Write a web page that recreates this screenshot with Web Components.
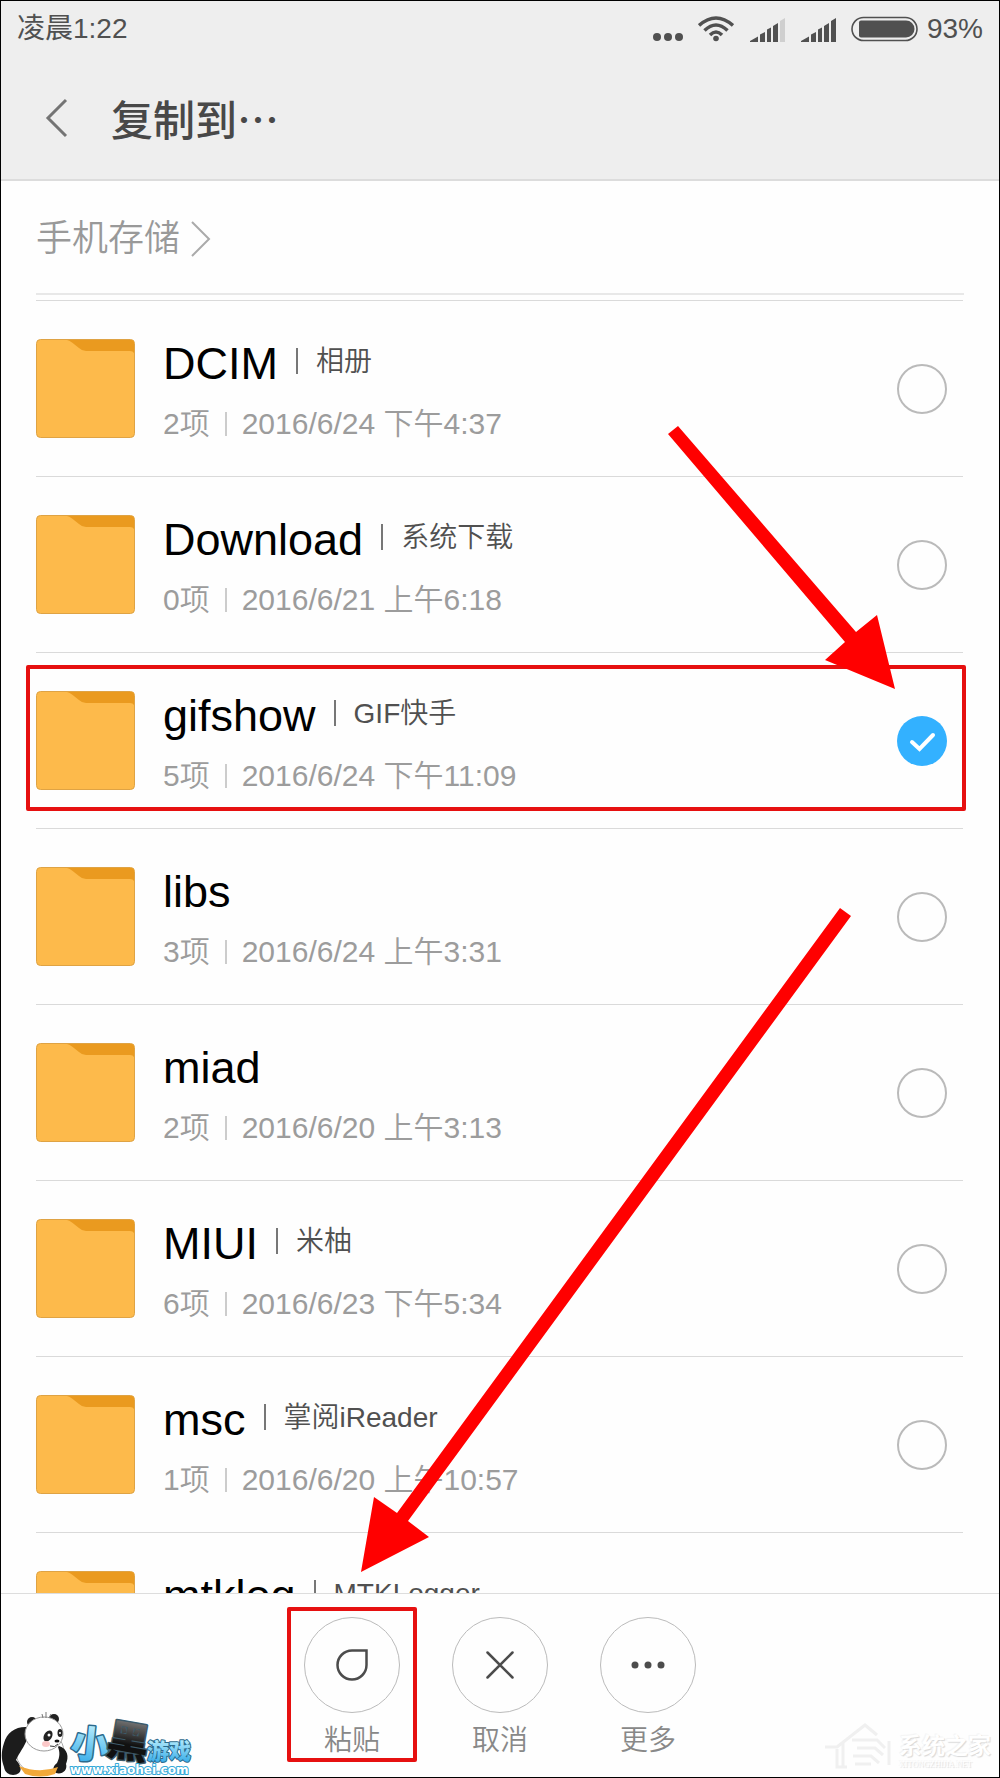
<!DOCTYPE html>
<html lang="zh-CN">
<head>
<meta charset="UTF-8">
<meta name="viewport" content="width=device-width, initial-scale=1">
<title>复制到…</title>
<style>
    html, body {
        height: 100%;
        margin: 0;
    }

    body {
        background: #fefefe;
        font-family: "Liberation Sans", "Noto Sans CJK SC", sans-serif;
        color: #000;
    }
</style>
</head>
<body>
<file-picker></file-picker>

<script>
/** Status bar: clock, signal icons and battery */
class StatusBar extends HTMLElement {
    constructor() {
        super();
        this.attachShadow({ mode: 'open' });
    }

    connectedCallback() {
        this.shadowRoot.innerHTML = `
            <style>
                :host {
                    display: flex;
                    align-items: center;
                    justify-content: space-between;
                    height: 56px;
                    padding: 0 16px;
                    font-size: 28px;
                    line-height: 40px;
                    color: #505050;
                }

                .icons {
                    display: flex;
                    align-items: center;
                    gap: 15px;
                }

                .battery {
                    display: flex;
                    align-items: center;
                    gap: 8px;
                }

                svg {
                    display: block;
                    fill: currentColor;
                }
            </style>
            <span><slot></slot></span>
            <div class="icons">
                <svg width="30" height="26" viewBox="0 0 30 26">
                    <circle cx="4" cy="21" r="4"/><circle cx="15" cy="21" r="4"/><circle cx="26" cy="21" r="4"/>
                </svg>
                <svg width="36" height="26" viewBox="0 0 36 26">
                    <g fill="none" stroke="currentColor" stroke-width="3.500">
                        <path d="M1 9.500Q18 -5.500 35 9.500"/>
                        <path d="M6.500 14.500Q18 3.500 29.500 14.500"/>
                        <path d="M12 19Q18 13 24 19"/>
                    </g>
                    <circle cx="18" cy="22.500" r="2.800"/>
                </svg>
                <svg width="36" height="26" viewBox="0 0 36 26">
                    <path d="M1 26V25L9 20.500V26zM11 26V18.500L16 16V26zM18 26V13.500L22 11.500V26zM24 26V10L29 7V26z"/>
                    <path d="M31 26V5L36 2V26z" fill="#cfcfcf"/>
                </svg>
                <svg width="36" height="26" viewBox="0 0 36 26">
                    <path d="M1 26V25L9 20.500V26zM11 26V18.500L16 16V26zM18 26V13.500L22 11.500V26zM24 26V10L29 7V26zM31 26V5L36 2V26z"/>
                </svg>
                <div class="battery">
                    <svg width="68" height="26" viewBox="0 0 68 26">
                        <rect x="1" y="1.500" width="65" height="23" rx="11.500" fill="none" stroke="currentColor" stroke-width="1.600"/>
                        <path d="M10 4.500H55a8.500 8.500 0 0 1 0 17H10a2 2 0 0 1-2-2V6.500a2 2 0 0 1 2-2z"/>
                    </svg>
                    <slot name="battery"></slot>
                </div>
            </div>
        `;
    }
}

/** Title bar with the back button */
class TitleBar extends HTMLElement {
    constructor() {
        super();
        this.attachShadow({ mode: 'open' });
    }

    connectedCallback() {
        this.shadowRoot.innerHTML = `
            <style>
                :host {
                    display: flex;
                    align-items: center;
                    gap: 42px;
                    height: 122px;
                    padding: 0 44px;
                    border-bottom: 2px solid #dcdcdc;
                }

                button {
                    padding: 0;
                    border: 0;
                    background: none;
                }

                svg {
                    display: block;
                }

                h1 {
                    margin: 0;
                    font: 500 42px/60px "Noto Sans CJK SC", sans-serif;
                    color: #484848;
                }
            </style>
            <button type="button" aria-label="返回">
                <svg width="24" height="40" viewBox="0 0 24 40" fill="none" stroke="#747474" stroke-width="3">
                    <path d="M21 2L3 20L21 38"/>
                </svg>
            </button>
            <h1><slot></slot></h1>
        `;
    }
}

/** Current location above the list */
class PathBar extends HTMLElement {
    constructor() {
        super();
        this.attachShadow({ mode: 'open' });
    }

    connectedCallback() {
        this.shadowRoot.innerHTML = `
            <style>
                :host {
                    display: block;
                    padding: 0 35px;
                }

                nav {
                    display: flex;
                    align-items: center;
                    height: 108px;
                    padding-top: 4px;
                    border-bottom: 2px solid #e8e8e8;
                }

                a {
                    display: flex;
                    align-items: center;
                    gap: 10px;
                    font-size: 36px;
                    font-weight: 350;
                    line-height: 52px;
                    color: #999;
                    text-decoration: none;
                }
            </style>
            <nav>
                <a href="#">
                    <slot></slot>
                    <svg width="22" height="36" viewBox="0 0 22 36" fill="none" stroke="#aaa" stroke-width="2">
                        <path d="M2 1L19 18L2 35"/>
                    </svg>
                </a>
            </nav>
        `;
    }
}

/** One folder row: name, alias, item count, date and a tick box */
class FolderRow extends HTMLElement {
    constructor() {
        super();
        this.attachShadow({ mode: 'open' });
    }

    connectedCallback() {
        const name = this.getAttribute('name');
        const alias = this.getAttribute('alias');
        const count = this.getAttribute('count');
        const checked = this.hasAttribute('checked');

        this.shadowRoot.innerHTML = `
            <style>
                :host {
                    display: block;
                    position: relative;
                    flex: none;
                }

                label {
                    display: flex;
                    align-items: center;
                    height: 175px;
                    padding-right: 16px;
                    border-bottom: 1px solid #dadada;
                }

                .folder {
                    flex: none;
                    margin-right: 28px;
                }

                .info {
                    flex: 1;
                    min-width: 0;
                    padding-top: 2px;
                    white-space: nowrap;
                }

                .title {
                    display: flex;
                    align-items: flex-start;
                }

                .name {
                    font-size: 45px;
                    line-height: 60px;
                }

                .alias {
                    position: relative;
                    margin-left: 18px;
                    padding-left: 20px;
                    font-size: 28px;
                    font-weight: 350;
                    line-height: 56px;
                    color: #505050;
                }

                .alias::before {
                    content: '';
                    position: absolute;
                    left: 0;
                    top: 14px;
                    width: 2px;
                    height: 26px;
                    background: #777;
                }

                .meta {
                    display: flex;
                    align-items: center;
                    min-height: 44px;
                    margin-top: 8px;
                    font-size: 30px;
                    font-weight: 350;
                    line-height: 44px;
                    color: #9c9c9c;
                }

                .meta i {
                    width: 2px;
                    height: 24px;
                    margin: 0 15px;
                    background: #ccc;
                }

                input {
                    appearance: none;
                    flex: none;
                    width: 50px;
                    height: 50px;
                    margin: 0;
                    border: 2px solid #bababa;
                    border-radius: 50%;
                }

                input:checked {
                    border: 0;
                    background: #33b1ff url('data:image/svg+xml,<svg xmlns="http://www.w3.org/2000/svg" viewBox="0 0 50 50" fill="none" stroke="white" stroke-width="4" stroke-linecap="round"><path d="M15 26L22.500 33L36 19"/></svg>');
                }

                .mark {
                    position: absolute;
                    inset: 12px -3px 18px -10px;
                    border: 4px solid #e61010;
                    border-radius: 2px;
                    pointer-events: none;
                }
            </style>
            <label>
                <svg class="folder" width="99" height="99" viewBox="0 0 99 99">
                    <rect x=".5" y=".5" width="98" height="98" rx="4" fill="#fdba4b" stroke="#dfa344"/>
                    <path d="M31 1H95q3 0 3 3V14q-1-2-4-2H50q-4 0-7-3L36 3.500Q33 1 31 1z" fill="#ea9a1f"/>
                </svg>
                <div class="info">
                    <div class="title">
                        <span class="name">${name}</span>
                        ${alias ? `<span class="alias">${alias}</span>` : ''}
                    </div>
                    <div class="meta">
                        ${count ? `<span>${count}</span><i></i><span>${this.getAttribute('date')}</span>` : ''}
                    </div>
                </div>
                <input type="checkbox" aria-label="${name}" ${checked ? 'checked' : ''}>
            </label>
            ${checked ? '<div class="mark"></div>' : ''}
        `;
    }
}

/** Round button with a caption, icon goes in the slot */
class ToolButton extends HTMLElement {
    constructor() {
        super();
        this.attachShadow({ mode: 'open' });
    }

    connectedCallback() {
        this.shadowRoot.innerHTML = `
            <style>
                :host {
                    display: block;
                    position: relative;
                }

                button {
                    display: flex;
                    flex-direction: column;
                    align-items: center;
                    gap: 8px;
                    padding: 0;
                    border: 0;
                    background: none;
                    font: inherit;
                    color: #888;
                }

                .ring {
                    display: grid;
                    place-items: center;
                    box-sizing: border-box;
                    width: 96px;
                    height: 96px;
                    border: 1px solid #bbb;
                    border-radius: 50%;
                }

                .caption {
                    font-size: 28px;
                    font-weight: 350;
                    line-height: 40px;
                }

                .mark {
                    position: absolute;
                    inset: -10px -17px -1px;
                    border: 4px solid #e61010;
                    border-radius: 2px;
                    pointer-events: none;
                }
            </style>
            <button type="button">
                <span class="ring"><slot></slot></span>
                <span class="caption">${this.getAttribute('caption')}</span>
            </button>
            ${this.hasAttribute('marked') ? '<div class="mark"></div>' : ''}
        `;
    }
}

/** Panda logo, bottom left */
class PandaLogo extends HTMLElement {
    constructor() {
        super();
        this.attachShadow({ mode: 'open' });
    }

    connectedCallback() {
        this.shadowRoot.innerHTML = `
            <style>
                :host {
                    display: block;
                    width: 192px;
                    height: 68px;
                }

                svg {
                    display: block;
                    overflow: visible;
                }

                text {
                    font-family: "Noto Sans CJK SC", sans-serif;
                    font-weight: 900;
                    paint-order: stroke;
                    stroke-linejoin: round;
                }

                .url {
                    font-family: "DejaVu Sans", sans-serif;
                    font-weight: 700;
                }
            </style>
            <svg width="192" height="68" viewBox="0 0 192 68">
                <defs>
                    <linearGradient id="blue" x1="0" y1="0" x2="0" y2="1">
                        <stop offset=".2" stop-color="#b4ebfc"/>
                        <stop offset="1" stop-color="#2aa5e6"/>
                    </linearGradient>
                    <linearGradient id="dark" x1="0" y1="0" x2="0" y2="1">
                        <stop offset=".2" stop-color="#777"/>
                        <stop offset=".6" stop-color="#111"/>
                    </linearGradient>
                </defs>
                <ellipse cx="39" cy="43" rx="24" ry="22" fill="#fff" stroke="#aaa"/>
                <path d="M27 18C15 17 6 23 3 34C0 43 0 50 3 58C4 66 13 68 18 64C22 60 18 54 15 51C18 44 24 37 26 30z" fill="#1c1c1c"/>
                <path d="M58 37C67 40 68 48 65 55C67 61 61 66 55 64C50 61 53 56 56 54C59 48 59 43 57 38z" fill="#1c1c1c"/>
                <path d="M18 57Q38 65 57 58L54 65Q39 70 24 65z" fill="#f2a93a"/>
                <circle cx="31" cy="13" r="5" fill="#222"/>
                <circle cx="53" cy="10" r="5" fill="#222"/>
                <ellipse cx="43" cy="25" rx="19" ry="17" fill="#fff" stroke="#999"/>
                <path d="M42 9L41 5M45 9L45 3M48 9L50 5" stroke="#777" fill="none"/>
                <ellipse cx="47" cy="27" rx="4" ry="6" transform="rotate(30 47 27)" fill="#222"/>
                <ellipse cx="59" cy="24" rx="2.500" ry="4" fill="#222"/>
                <circle cx="48" cy="26" r="1.500" fill="#fff"/>
                <circle cx="59" cy="24" r="1" fill="#fff"/>
                <ellipse cx="56" cy="32" rx="2.500" ry="1.500" fill="#111"/>
                <ellipse cx="45" cy="35" rx="4" ry="3" fill="#fbc8c8"/>
                <path d="M49 37Q54 39 57 35" stroke="#333" fill="none"/>
                <g stroke="#2c6a8c" stroke-width="3">
                    <text x="70" y="49" font-size="38" fill="url(#blue)" transform="rotate(6 88 35)">小</text>
                    <text x="106" y="48" font-size="42" fill="url(#dark)" stroke="#3d5a69" transform="rotate(10 127 34)">黑</text>
                    <text x="146" y="50" font-size="22" fill="url(#blue)" stroke-width="2">游戏</text>
                </g>
                <text class="url" x="69" y="65" font-size="12" fill="#fff" stroke="#35a9d8" stroke-width="2">www.xiaohei.com</text>
            </svg>
        `;
    }
}

/** Faint site watermark, bottom right */
class SiteWatermark extends HTMLElement {
    constructor() {
        super();
        this.attachShadow({ mode: 'open' });
    }

    connectedCallback() {
        this.shadowRoot.innerHTML = `
            <style>
                :host {
                    display: flex;
                    align-items: flex-end;
                    gap: 4px;
                    color: #fff;
                    text-shadow: 1px 1px 1px #d8d8d8, -1px -1px 1px #f4f4f4;
                }

                strong {
                    display: block;
                    font-size: 23px;
                    line-height: 26px;
                }

                small {
                    display: block;
                    font: 8px/12px "Liberation Serif", serif;
                }
            </style>
            <svg width="72" height="50" viewBox="0 0 72 50" fill="none" stroke="#f0f0f0" stroke-width="3">
                <path d="M2 26H14L42 4L54 14M20 22V46M14 28V46H24M29 19H54L62 27M34 27H52L60 34M30 35H48L56 42M32 43H48M66 20V44"/>
            </svg>
            <div><strong>系统之家</strong><small>XITONGZHIJIA.NET</small></div>
        `;
    }
}

/** Red pointer arrows drawn over the whole screen */
class PointerArrows extends HTMLElement {
    constructor() {
        super();
        this.attachShadow({ mode: 'open' });
    }

    connectedCallback() {
        this.shadowRoot.innerHTML = `
            <style>
                :host {
                    display: block;
                    position: absolute;
                    inset: 0;
                    pointer-events: none;
                }

                svg {
                    display: block;
                    width: 100%;
                    height: 100%;
                }
            </style>
            <svg viewBox="1 1 998 1776" fill="#f00">
                <path d="M668 434L678 426L856 632L877 615L895 689L825 660L845 642z"/>
                <path d="M840 908L851 916L408 1521L429 1537L361 1572L374 1497L397 1513z"/>
            </svg>
        `;
    }
}

/** The whole screen */
class FilePicker extends HTMLElement {
    constructor() {
        super();
        this.attachShadow({ mode: 'open' });
    }

    connectedCallback() {
        this.shadowRoot.innerHTML = `
            <style>
                :host {
                    display: flex;
                    flex-direction: column;
                    position: relative;
                    box-sizing: border-box;
                    height: 100vh;
                    border: 1px solid #000;
                    overflow: hidden;
                }

                header {
                    flex: none;
                    background: #eee;
                }

                path-bar {
                    flex: none;
                }

                main {
                    display: flex;
                    flex-direction: column;
                    flex: 1;
                    min-height: 0;
                    margin-top: 5px;
                    padding: 0 36px 0 35px;
                    overflow: hidden;
                }

                .line {
                    flex: none;
                    height: 1px;
                    background: #dadada;
                }

                footer {
                    flex: none;
                    display: flex;
                    align-items: flex-start;
                    justify-content: center;
                    gap: 52px;
                    height: 160px;
                    padding-top: 23px;
                    border-top: 1px solid #ddd;
                    background: #fefefe;
                }

                panda-logo {
                    position: absolute;
                    left: 0;
                    bottom: 0;
                }

                site-watermark {
                    position: absolute;
                    right: 8px;
                    bottom: 6px;
                }
            </style>
            <header>
                <status-bar>凌晨1:22<span slot="battery">93%</span></status-bar>
                <title-bar>复制到…</title-bar>
            </header>
            <path-bar>手机存储</path-bar>
            <main>
                <div class="line"></div>
                <folder-row name="DCIM" alias="相册" count="2项" date="2016/6/24 下午4:37"></folder-row>
                <folder-row name="Download" alias="系统下载" count="0项" date="2016/6/21 上午6:18"></folder-row>
                <folder-row name="gifshow" alias="GIF快手" count="5项" date="2016/6/24 下午11:09" checked></folder-row>
                <folder-row name="libs" count="3项" date="2016/6/24 上午3:31"></folder-row>
                <folder-row name="miad" count="2项" date="2016/6/20 上午3:13"></folder-row>
                <folder-row name="MIUI" alias="米柚" count="6项" date="2016/6/23 下午5:34"></folder-row>
                <folder-row name="msc" alias="掌阅iReader" count="1项" date="2016/6/20 上午10:57"></folder-row>
                <folder-row name="mtklog" alias="MTKLogger"></folder-row>
            </main>
            <footer>
                <tool-button caption="粘贴" marked>
                    <svg width="32" height="32" viewBox="0 0 32 32" fill="none" stroke="#4c4c4c" stroke-width="2.500">
                        <path d="M16 1.500H30.500V16A14.500 14.500 0 1 1 16 1.500z"/>
                    </svg>
                </tool-button>
                <tool-button caption="取消">
                    <svg width="28" height="28" viewBox="0 0 28 28" fill="none" stroke="#4c4c4c" stroke-width="2.500" stroke-linecap="round">
                        <path d="M1.500 1.500L26.500 26.500M26.500 1.500L1.500 26.500"/>
                    </svg>
                </tool-button>
                <tool-button caption="更多">
                    <svg width="34" height="8" viewBox="0 0 34 8" fill="#4c4c4c">
                        <circle cx="4" cy="4" r="3.500"/><circle cx="17" cy="4" r="3.500"/><circle cx="30" cy="4" r="3.500"/>
                    </svg>
                </tool-button>
            </footer>
            <panda-logo></panda-logo>
            <site-watermark></site-watermark>
            <pointer-arrows></pointer-arrows>
        `;
    }
}

customElements.define('status-bar', StatusBar);
customElements.define('title-bar', TitleBar);
customElements.define('path-bar', PathBar);
customElements.define('folder-row', FolderRow);
customElements.define('tool-button', ToolButton);
customElements.define('panda-logo', PandaLogo);
customElements.define('site-watermark', SiteWatermark);
customElements.define('pointer-arrows', PointerArrows);
customElements.define('file-picker', FilePicker);
</script>
</body>
</html>
